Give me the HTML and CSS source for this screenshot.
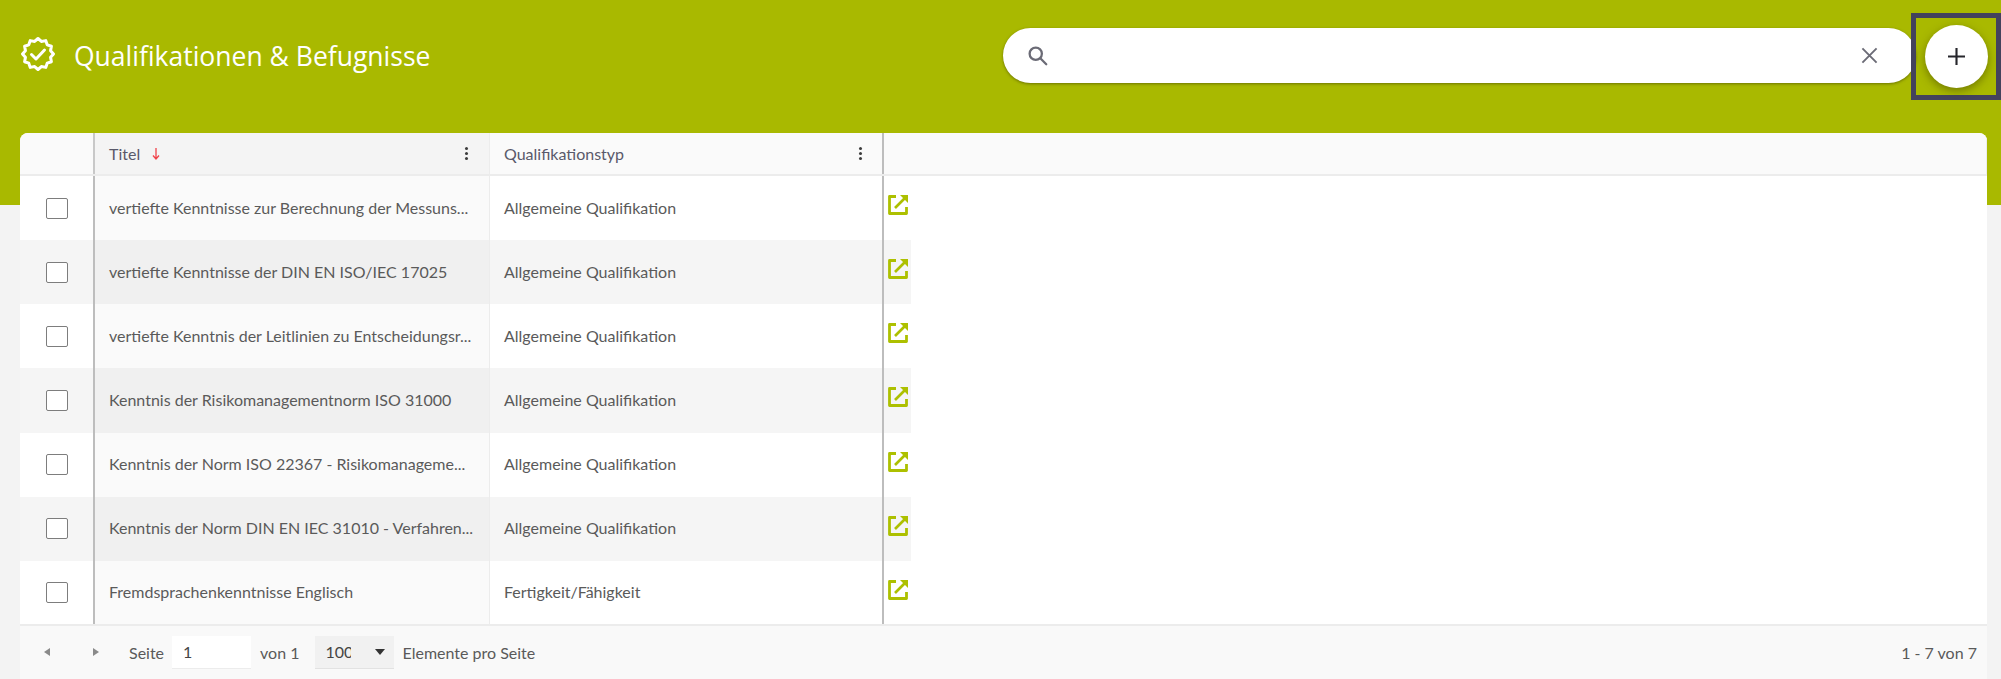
FILE: index.html
```html
<!DOCTYPE html>
<html lang="de">
  <head>
    <meta charset="UTF-8" />
    <title>Qualifikationen &amp; Befugnisse</title>
    <link rel="stylesheet" href="styles.css">
  </head>
  <body>
    <div class="page">
      <div class="top-bar">
        <div class="page-title">
          <svg class="title-icon" viewBox="0 0 34 34" fill="none" stroke="#fff" stroke-width="3" stroke-linejoin="round" stroke-linecap="round">
            <polygon points="32.5,17 29.56,20.36 30.4,24.75 26.19,26.19 24.75,30.4 20.36,29.56 17,32.5 13.64,29.56 9.25,30.4 7.81,26.19 3.6,24.75 4.44,20.36 1.5,17 4.44,13.64 3.6,9.25 7.81,7.81 9.25,3.6 13.64,4.44 17,1.5 20.36,4.44 24.75,3.6 26.19,7.81 30.4,9.25 29.56,13.64" />
            <path d="M10.5 17.5l4.5 4.5 8.5-9" />
          </svg>
          <h1>Qualifikationen &amp; Befugnisse</h1>
        </div>
        <div class="search-box">
          <svg class="search-icon" viewBox="0 0 24 24" fill="none" stroke="#6b6b76" stroke-width="2.6" stroke-linecap="round">
            <circle cx="10" cy="10" r="7" />
            <path d="M15.5 15.5l6.5 6.5" />
          </svg>
          <svg class="clear-icon" viewBox="0 0 18 18" fill="none" stroke="#6b6b76" stroke-width="2">
            <path d="M1.5 1.5l15 15M16.5 1.5l-15 15" />
          </svg>
        </div>
        <div class="add-focus">
          <button class="add-button" aria-label="Neu">
            <svg viewBox="0 0 16 16" fill="none" stroke="#26262c" stroke-width="2">
              <path d="M8 0v16M0 8h16" />
            </svg>
          </button>
        </div>
      </div>

      <div class="grid-card">
        <div class="grid-row grid-head">
          <div class="cell cell-check"></div>
          <div class="cell cell-title">
            <span>Titel</span>
            <svg class="sort-icon" viewBox="0 0 8 12" fill="none" stroke="#f0434a" stroke-width="1.3">
              <path d="M4 0v11M1 7.5L4 11l3-3.5" />
            </svg>
            <span class="col-menu"><i></i><i></i><i></i></span>
          </div>
          <div class="cell cell-type">
            <span>Qualifikationstyp</span>
            <span class="col-menu"><i></i><i></i><i></i></span>
          </div>
          <div class="cell cell-action"></div>
          <div class="cell cell-rest"></div>
        </div>

        <div class="grid-row">
          <div class="cell cell-check"><span class="checkbox"></span></div>
          <div class="cell cell-title">vertiefte Kenntnisse zur Berechnung der Messuns...</div>
          <div class="cell cell-type">Allgemeine Qualifikation</div>
          <div class="cell cell-action"><svg class="open-icon" viewBox="0 0 22 22"><use href="#open" /></svg></div>
        </div>
        <div class="grid-row striped">
          <div class="cell cell-check"><span class="checkbox"></span></div>
          <div class="cell cell-title">vertiefte Kenntnisse der DIN EN ISO/IEC 17025</div>
          <div class="cell cell-type">Allgemeine Qualifikation</div>
          <div class="cell cell-action"><svg class="open-icon" viewBox="0 0 22 22"><use href="#open" /></svg></div>
        </div>
        <div class="grid-row">
          <div class="cell cell-check"><span class="checkbox"></span></div>
          <div class="cell cell-title">vertiefte Kenntnis der Leitlinien zu Entscheidungsr...</div>
          <div class="cell cell-type">Allgemeine Qualifikation</div>
          <div class="cell cell-action"><svg class="open-icon" viewBox="0 0 22 22"><use href="#open" /></svg></div>
        </div>
        <div class="grid-row striped">
          <div class="cell cell-check"><span class="checkbox"></span></div>
          <div class="cell cell-title">Kenntnis der Risikomanagementnorm ISO 31000</div>
          <div class="cell cell-type">Allgemeine Qualifikation</div>
          <div class="cell cell-action"><svg class="open-icon" viewBox="0 0 22 22"><use href="#open" /></svg></div>
        </div>
        <div class="grid-row">
          <div class="cell cell-check"><span class="checkbox"></span></div>
          <div class="cell cell-title">Kenntnis der Norm ISO 22367 - Risikomanageme...</div>
          <div class="cell cell-type">Allgemeine Qualifikation</div>
          <div class="cell cell-action"><svg class="open-icon" viewBox="0 0 22 22"><use href="#open" /></svg></div>
        </div>
        <div class="grid-row striped">
          <div class="cell cell-check"><span class="checkbox"></span></div>
          <div class="cell cell-title">Kenntnis der Norm DIN EN IEC 31010 - Verfahren...</div>
          <div class="cell cell-type">Allgemeine Qualifikation</div>
          <div class="cell cell-action"><svg class="open-icon" viewBox="0 0 22 22"><use href="#open" /></svg></div>
        </div>
        <div class="grid-row">
          <div class="cell cell-check"><span class="checkbox"></span></div>
          <div class="cell cell-title">Fremdsprachenkenntnisse Englisch</div>
          <div class="cell cell-type">Fertigkeit/Fähigkeit</div>
          <div class="cell cell-action"><svg class="open-icon" viewBox="0 0 22 22"><use href="#open" /></svg></div>
        </div>

        <div class="pager">
          <span class="arrow arrow-left"></span>
          <span class="arrow arrow-right"></span>
          <span class="pager-page">Seite</span>
          <span class="page-input">1</span>
          <span class="pager-of">von 1</span>
          <span class="page-size"><span class="page-size-value">100</span><span class="caret"></span></span>
          <span>Elemente pro Seite</span>
          <span class="pager-count">1 - 7 von 7</span>
        </div>
      </div>
    </div>

    <svg class="icon-defs" aria-hidden="true">
      <symbol id="open" viewBox="0 0 22 22">
        <path fill="none" stroke="#adc000" stroke-width="2.8" stroke-linejoin="round" d="M9 2.5H2.5v17h17V13" />
        <path fill="none" stroke="#adc000" stroke-width="2.6" d="M8 14L18 4" />
        <path fill="#adc000" d="M13 1h8v8z" />
      </symbol>
    </svg>
  </body>
</html>
```

FILE: styles.css
```css
html,
body {
  margin: 0;
  padding: 0;
  height: 100%;
  overflow: hidden;
}
body {
  font-family: Lato, "Open Sans", sans-serif;
  font-size: 16px;
  color: #5a5a5a;
  background: #f3f3f3;
}
.page {
  height: 679px;
  overflow: hidden;
}
.top-bar {
  height: 205px;
  background: #a9b900;
  display: flex;
  align-items: flex-start;
  box-sizing: border-box;
  padding: 13px 0 0 21px;
}
.page-title {
  display: flex;
  align-items: center;
  gap: 19px;
  height: 86px;
  width: 983px;
  color: #fff;
}
.title-icon {
  width: 34px;
  height: 34px;
  margin-top: -4px;
}
h1 {
  margin: 0;
  font-family: "Open Sans", sans-serif;
  font-size: 26.5px;
  font-weight: 400;
  white-space: nowrap;
}
.search-box {
  width: 913px;
  height: 55px;
  margin-top: 15px;
  margin-right: -5px;
  background: #fff;
  border-radius: 28px;
  box-shadow: 0 1px 3px rgba(60, 60, 0, 0.55);
  display: flex;
  align-items: center;
  justify-content: space-between;
  padding: 0 38px 0 24px;
  box-sizing: border-box;
}
.search-icon {
  width: 21px;
  height: 21px;
}
.clear-icon {
  width: 17px;
  height: 17px;
}
.add-focus {
  width: 80px;
  height: 77px;
  border: 5px solid #43425d;
  flex: none;
  display: flex;
  align-items: center;
  justify-content: center;
  position: relative;
  z-index: 1;
}
.add-button {
  width: 63px;
  height: 63px;
  border: none;
  padding: 0;
  border-radius: 50%;
  background: #fff;
  box-shadow: 0 3px 8px rgba(60, 60, 0, 0.5);
  display: flex;
  align-items: center;
  justify-content: center;
}
.add-button svg {
  width: 17px;
  height: 17px;
}
.grid-card {
  width: 1967px;
  height: 546px;
  margin: -72px 0 0 20px;
  background: #fff;
  border-radius: 8px 8px 0 0;
  overflow: hidden;
  position: relative;
  display: flex;
  flex-direction: column;
}
.grid-row {
  display: flex;
  height: 64.15px;
  flex: none;
}
.cell {
  box-sizing: border-box;
  display: flex;
  align-items: center;
  white-space: nowrap;
}
.cell-check {
  width: 75px;
  justify-content: center;
  border-right: 2px solid #bdbdbd;
  padding-left: 1px;
}
.cell-title {
  width: 395px;
  padding: 0 12px 2px 14px;
  border-right: 1px solid #ececec;
  background: #fafafa;
}
.cell-type {
  width: 394px;
  padding: 0 12px 2px 14px;
  border-right: 2px solid #bdbdbd;
}
.cell-action {
  width: 27px;
  align-items: flex-start;
  padding: 18px 0 0 3px;
}
.cell-rest {
  flex: 1;
  border-right: 1px solid #ececec;
}
.striped .cell-check,
.striped .cell-type,
.striped .cell-action {
  background: #f5f5f5;
}
.striped .cell-title {
  background: #f0f0f0;
}
.grid-head {
  height: 43px;
  background: #fafafa;
  border-bottom: 2px solid #ececec;
  box-sizing: border-box;
  color: #59596a;
}
.grid-head .cell-check {
  border-right-color: #c8c8c8;
}
.grid-head .cell-title {
  background: #f4f4f4;
  padding: 0 21px 0 14px;
}
.grid-head .cell-type {
  justify-content: space-between;
  padding: 0 20px 0 14px;
}
.sort-icon {
  width: 8px;
  height: 12px;
  margin-left: 12px;
}
.col-menu {
  margin-left: auto;
  display: flex;
  flex-direction: column;
  gap: 2px;
}
.col-menu i {
  width: 3px;
  height: 3px;
  border-radius: 50%;
  background: #3c3c3c;
}
.checkbox {
  width: 20px;
  height: 19px;
  border: 1px solid #7d7d7d;
  border-radius: 2px;
  background: #fff;
}
.open-icon {
  width: 22px;
  height: 22px;
}
.icon-defs {
  display: none;
}
.pager {
  flex: 1;
  background: #f9f9f9;
  border-top: 2px solid #ececec;
  margin-top: -1px;
  display: flex;
  align-items: center;
  box-sizing: border-box;
  padding: 0 10px 0 24px;
}
.arrow {
  width: 0;
  height: 0;
  border-top: 4px solid transparent;
  border-bottom: 4px solid transparent;
}
.arrow-left {
  border-right: 6px solid #8a8a8a;
}
.arrow-right {
  margin-left: 43px;
  border-left: 6px solid #8a8a8a;
}
.pager-page {
  margin-left: 30px;
}
.page-input {
  width: 79px;
  height: 33px;
  margin-left: 8px;
  box-sizing: border-box;
  background: #fff;
  border-bottom: 1px solid #ececec;
  padding-left: 11px;
  line-height: 32px;
  color: #444;
}
.pager-of {
  margin-left: 9px;
}
.page-size {
  width: 79px;
  height: 33px;
  margin: 0 9px 0 15px;
  box-sizing: border-box;
  background: #f1f1f1;
  border-bottom: 1px solid #e2e2e2;
  display: flex;
  align-items: center;
  justify-content: space-between;
  padding: 0 9px 0 11px;
}
.page-size-value {
  width: 25px;
  overflow: hidden;
  color: #444;
}
.caret {
  width: 0;
  height: 0;
  border-left: 5px solid transparent;
  border-right: 5px solid transparent;
  border-top: 6px solid #333;
}
.pager-count {
  margin-left: auto;
}
```
